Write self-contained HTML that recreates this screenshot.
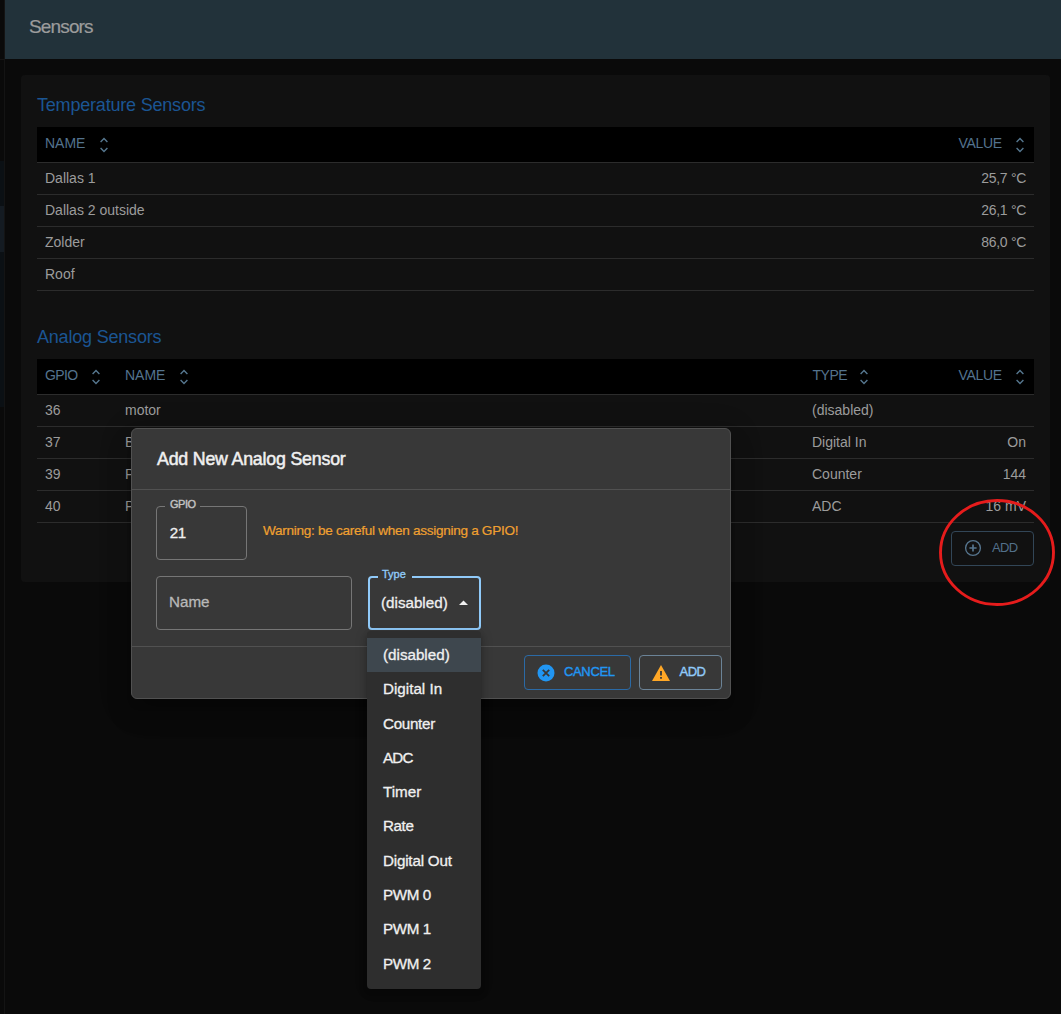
<!DOCTYPE html>
<html><head><meta charset="utf-8">
<style>
*{margin:0;padding:0;box-sizing:border-box}
html,body{width:1061px;height:1014px;overflow:hidden;background:#0a0a0a;font-family:"Liberation Sans",sans-serif}
.a{position:absolute;white-space:nowrap;line-height:1}
#strip{position:absolute;left:0;top:0;width:5px;height:1014px;background:#0a0a0a;border-right:1px solid #141414}
#hdr{position:absolute;left:5px;top:0;width:1056px;height:59px;background:#22323a}
#card{position:absolute;left:21px;top:75px;width:1029px;height:507px;background:#111;border-radius:4px}
.th{position:absolute;left:37px;width:997px;height:36px;background:#000;border-bottom:1px solid #2c2c2c}
.tr{position:absolute;left:37px;width:997px;height:1px;background:#2c2c2c}
.title{color:#1b5593;font-size:18px;letter-spacing:-0.2px}
.hd{color:#54738e;font-size:14px}
.td{color:#9c9c9c;font-size:14px}
.w{-webkit-text-stroke:0.3px #f0f0f0}
.sort{position:absolute;width:9px;height:15px}
</style></head><body>
<div id="strip"></div>
<div class="a" style="left:0;top:59px;width:4px;height:1px;background:#141414"></div>
<div class="a" style="left:0;top:161px;width:4px;height:45px;background:#0b1014"></div>
<div class="a" style="left:0;top:206px;width:4px;height:46px;background:#141b22"></div>
<div class="a" style="left:0;top:252px;width:4px;height:155px;background:#0b1014"></div>
<div id="hdr"></div>
<div class="a" style="left:29px;top:17px;font-size:19px;letter-spacing:-0.85px;color:#9c9c9c;-webkit-text-stroke:0.2px #9c9c9c">Sensors</div>

<div id="card"></div>
<div class="a title" style="left:37px;top:96px">Temperature Sensors</div>
<div class="th" style="top:127px"></div>
<div class="a hd" style="left:45px;top:136px">NAME</div>
<div class="a hd" style="left:958.5px;top:136px;letter-spacing:-0.3px">VALUE</div>
<div class="tr" style="top:194px"></div>
<div class="tr" style="top:226px"></div>
<div class="tr" style="top:258px"></div>
<div class="tr" style="top:290px"></div>
<div class="a td" style="left:45px;top:171px">Dallas 1</div>
<div class="a td" style="left:45px;top:203px">Dallas 2 outside</div>
<div class="a td" style="left:45px;top:235px">Zolder</div>
<div class="a td" style="left:45px;top:267px">Roof</div>
<div class="a td" style="right:35px;top:171px;letter-spacing:-0.3px">25,7 °C</div>
<div class="a td" style="right:35px;top:203px;letter-spacing:-0.3px">26,1 °C</div>
<div class="a td" style="right:35px;top:235px;letter-spacing:-0.3px">86,0 °C</div>

<div class="a title" style="left:37px;top:328px">Analog Sensors</div>
<div class="th" style="top:359px"></div>
<div class="a hd" style="left:45px;top:368px;letter-spacing:-0.6px">GPIO</div>
<div class="a hd" style="left:125px;top:368px">NAME</div>
<div class="a hd" style="left:812.5px;top:368px;letter-spacing:-0.5px">TYPE</div>
<div class="a hd" style="left:958.5px;top:368px;letter-spacing:-0.3px">VALUE</div>
<div class="tr" style="top:426px"></div>
<div class="tr" style="top:458px"></div>
<div class="tr" style="top:490px"></div>
<div class="tr" style="top:522px"></div>
<div class="a td" style="left:45px;top:403px">36</div>
<div class="a td" style="left:45px;top:435px">37</div>
<div class="a td" style="left:45px;top:467px">39</div>
<div class="a td" style="left:45px;top:499px">40</div>
<div class="a td" style="left:125px;top:403px">motor</div>
<div class="a td" style="left:125px;top:435px">B</div>
<div class="a td" style="left:125px;top:467px">P</div>
<div class="a td" style="left:125px;top:499px">P</div>
<div class="a td" style="left:812px;top:403px">(disabled)</div>
<div class="a td" style="left:812px;top:435px">Digital In</div>
<div class="a td" style="left:812px;top:467px">Counter</div>
<div class="a td" style="left:812px;top:499px">ADC</div>
<div class="a td" style="right:35px;top:435px">On</div>
<div class="a td" style="right:35px;top:467px">144</div>
<div class="a td" style="right:35px;top:499px">16 mV</div>
<svg class="a" style="left:99px;top:137px" width="10" height="16" viewBox="0 0 10 16"><path d="M1.6 5L5 1.6L8.4 5M1.6 11L5 14.4L8.4 11" fill="none" stroke="#56778f" stroke-width="1.4"/></svg><svg class="a" style="left:1015px;top:137px" width="10" height="16" viewBox="0 0 10 16"><path d="M1.6 5L5 1.6L8.4 5M1.6 11L5 14.4L8.4 11" fill="none" stroke="#56778f" stroke-width="1.4"/></svg><svg class="a" style="left:91px;top:369px" width="10" height="16" viewBox="0 0 10 16"><path d="M1.6 5L5 1.6L8.4 5M1.6 11L5 14.4L8.4 11" fill="none" stroke="#56778f" stroke-width="1.4"/></svg><svg class="a" style="left:179px;top:369px" width="10" height="16" viewBox="0 0 10 16"><path d="M1.6 5L5 1.6L8.4 5M1.6 11L5 14.4L8.4 11" fill="none" stroke="#56778f" stroke-width="1.4"/></svg><svg class="a" style="left:859px;top:369px" width="10" height="16" viewBox="0 0 10 16"><path d="M1.6 5L5 1.6L8.4 5M1.6 11L5 14.4L8.4 11" fill="none" stroke="#56778f" stroke-width="1.4"/></svg><svg class="a" style="left:1015px;top:369px" width="10" height="16" viewBox="0 0 10 16"><path d="M1.6 5L5 1.6L8.4 5M1.6 11L5 14.4L8.4 11" fill="none" stroke="#56778f" stroke-width="1.4"/></svg>
<!-- card add button -->
<div class="a" style="left:951px;top:531px;width:83px;height:35px;border:1px solid #324657;border-radius:4px"></div>
<svg class="a" style="left:963px;top:538px" width="20" height="20" viewBox="0 0 20 20"><circle cx="10" cy="10" r="7.4" fill="none" stroke="#56758e" stroke-width="1.35"/><path d="M10 6.4V13.6M6.4 10H13.6" stroke="#56758e" stroke-width="1.7"/></svg>
<div class="a" style="left:992px;top:541px;font-size:13px;letter-spacing:-0.6px;color:#52708a">ADD</div>

<!-- dialog -->
<div class="a" style="left:131px;top:428px;width:600px;height:271px;background:#383838;border:1px solid #515151;border-radius:6px;box-shadow:0 8px 10px -5px rgba(0,0,0,.2),0 16px 24px 2px rgba(0,0,0,.14),0 6px 30px 5px rgba(0,0,0,.12)"></div>
<div class="a" style="left:157px;top:450.6px;font-size:17.8px;letter-spacing:-0.2px;color:#f0f0f0;-webkit-text-stroke:0.5px #f0f0f0">Add New Analog Sensor</div>
<div class="a" style="left:132px;top:489px;width:598px;height:1px;background:#515151"></div>
<div class="a" style="left:132px;top:646px;width:598px;height:1px;background:#515151"></div>

<div class="a" style="left:156px;top:506px;width:91px;height:54px;border:1px solid #767676;border-radius:4px"></div>
<div class="a" style="left:165px;top:500px;width:35px;height:10px;background:#383838"></div>
<div class="a" style="left:170px;top:499px;font-size:11px;letter-spacing:-0.5px;color:#c3c3c3;-webkit-text-stroke:0.4px #c3c3c3">GPIO</div>
<div class="a" style="left:169.7px;top:524.6px;font-size:15.2px;letter-spacing:-0.5px;color:#f0f0f0;-webkit-text-stroke:0.3px #f0f0f0">21</div>
<div class="a" style="left:263px;top:523.5px;font-size:13.6px;letter-spacing:-0.3px;color:#f0a030;-webkit-text-stroke:0.2px #f0a030">Warning: be careful when assigning a GPIO!</div>

<div class="a" style="left:156px;top:576px;width:196px;height:54px;border:1px solid #767676;border-radius:4px"></div>
<div class="a" style="left:169px;top:593.5px;font-size:15.2px;color:#b8b8b8;-webkit-text-stroke:0.3px #b8b8b8">Name</div>

<div class="a" style="left:368px;top:576px;width:113px;height:54px;border:2px solid #90caf9;border-radius:4px"></div>
<div class="a" style="left:378px;top:570px;width:34px;height:10px;background:#383838"></div>
<div class="a" style="left:382px;top:569px;font-size:11px;color:#90caf9;-webkit-text-stroke:0.35px #90caf9">Type</div>
<div class="a" style="left:381px;top:595px;font-size:15.2px;color:#f0f0f0;-webkit-text-stroke:0.3px #f0f0f0">(disabled)</div>
<svg class="a" style="left:458px;top:600px" width="11" height="6" viewBox="0 0 11 6"><path d="M1 5L5.5 0.5L10 5Z" fill="#f0f0f0"/></svg>

<!-- buttons -->
<div class="a" style="left:524px;top:655px;width:107px;height:35px;border:1px solid #2b6aa6;border-radius:4px"></div>
<svg class="a" style="left:537px;top:663.5px" width="18" height="18" viewBox="0 0 18 18"><circle cx="9" cy="9" r="8.5" fill="#2196f3"/><path d="M5.8 5.8L12.2 12.2M12.2 5.8L5.8 12.2" stroke="#383838" stroke-width="1.8"/></svg>
<div class="a" style="left:564px;top:665px;font-size:13px;letter-spacing:-0.35px;color:#2196f3;-webkit-text-stroke:0.4px #2196f3">CANCEL</div>
<div class="a" style="left:639px;top:655px;width:83px;height:35px;border:1px solid #6b8397;border-radius:4px"></div>
<svg class="a" style="left:651px;top:664px" width="20" height="18" viewBox="0 0 20 18"><path d="M10 1L19 17H1Z" fill="#ffa726"/><path d="M10 7V11.5M10 13V14.8" stroke="#383838" stroke-width="1.8"/></svg>
<div class="a" style="left:679.5px;top:665px;font-size:13px;letter-spacing:-0.5px;color:#90caf9;-webkit-text-stroke:0.4px #90caf9">ADD</div>

<!-- menu -->
<div class="a" style="left:367px;top:631px;width:114px;height:358px;background:#2e2e2e;border-radius:4px;box-shadow:0 3px 5px -1px rgba(0,0,0,.2),0 5px 8px 0 rgba(0,0,0,.14),0 1px 14px 0 rgba(0,0,0,.12)"></div>
<div class="a" style="left:367px;top:638px;width:114px;height:34px;background:#3e474e"></div>
<div class="a" style="left:383px;top:647.0px;font-size:15.2px;color:#f0f0f0;-webkit-text-stroke:0.3px #f0f0f0">(disabled)</div>
<div class="a" style="left:383px;top:681.3px;font-size:15.2px;color:#f0f0f0;-webkit-text-stroke:0.3px #f0f0f0">Digital In</div>
<div class="a" style="left:383px;top:715.6px;font-size:15.2px;letter-spacing:-0.3px;color:#f0f0f0;-webkit-text-stroke:0.3px #f0f0f0">Counter</div>
<div class="a" style="left:383px;top:749.9px;font-size:15.2px;letter-spacing:-0.8px;color:#f0f0f0;-webkit-text-stroke:0.3px #f0f0f0">ADC</div>
<div class="a" style="left:383px;top:784.2px;font-size:15.2px;color:#f0f0f0;-webkit-text-stroke:0.3px #f0f0f0">Timer</div>
<div class="a" style="left:383px;top:817.5px;font-size:15.2px;letter-spacing:-0.4px;color:#f0f0f0;-webkit-text-stroke:0.3px #f0f0f0">Rate</div>
<div class="a" style="left:383px;top:852.8px;font-size:15.2px;letter-spacing:-0.2px;color:#f0f0f0;-webkit-text-stroke:0.3px #f0f0f0">Digital Out</div>
<div class="a" style="left:383px;top:887.1px;font-size:15.2px;letter-spacing:-0.4px;color:#f0f0f0;-webkit-text-stroke:0.3px #f0f0f0">PWM 0</div>
<div class="a" style="left:383px;top:921.4px;font-size:15.2px;letter-spacing:-0.4px;color:#f0f0f0;-webkit-text-stroke:0.3px #f0f0f0">PWM 1</div>
<div class="a" style="left:383px;top:955.7px;font-size:15.2px;letter-spacing:-0.4px;color:#f0f0f0;-webkit-text-stroke:0.3px #f0f0f0">PWM 2</div>

<svg class="a" style="left:0;top:0" width="1061" height="1014"><ellipse cx="997" cy="552.5" rx="56.5" ry="52" fill="none" stroke="#e61c1c" stroke-width="2.9"/></svg>

</body></html>
